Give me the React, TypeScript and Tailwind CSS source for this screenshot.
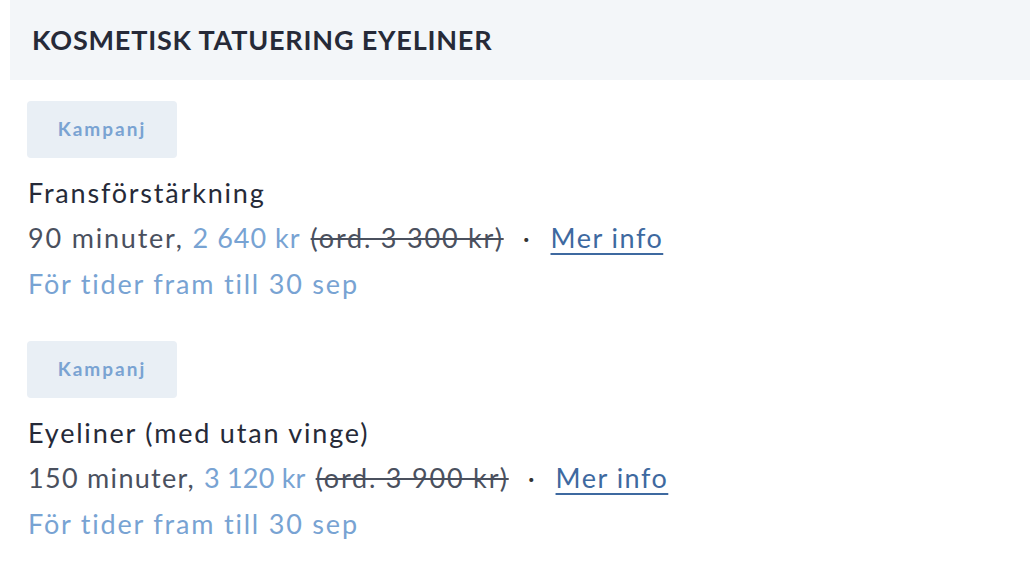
const items = [
  {
    name: 'Fransförstärkning',
    minutes: '90 minuter,',
    price: '2 640 kr',
    ord: '(ord. 3 300 kr)',
    minClass: 'tracking-[1.8px]',
    priceClass: 'tracking-[1px]',
  },
  {
    name: 'Eyeliner (med utan vinge)',
    minutes: '150 minuter,',
    price: '3 120 kr',
    ord: '(ord. 3 900 kr)',
    minClass: 'tracking-[1.3px]',
    priceClass: 'tracking-[0.2px]',
  },
];

export default function App() {
  return (
    <div className="w-[1030px] h-[568px] bg-white overflow-hidden" style={{ fontFamily: 'Lato, "Open Sans", sans-serif' }}>
      <div className="ml-[10px] h-[80px] bg-[#f3f6f9] flex items-center pl-[22px]">
        <h2 className="text-[27px] font-bold text-[#262a38] tracking-[0.8px]">KOSMETISK TATUERING EYELINER</h2>
      </div>
      <div className="px-[27px] pt-[21px]">
        {items.map((it) => (
          <div key={it.name} className="mb-[34px]">
            <div className="w-[150px] h-[57px] rounded-[4px] bg-[#e9eff5] flex items-center justify-center text-[19px] font-bold tracking-[2px] text-[#7aa3d2] mb-[12px]">
              Kampanj
            </div>
            <div className="text-[27px] leading-[46px] tracking-[1.8px] text-[#262a38] pl-[1px]">{it.name}</div>
            <div className="text-[27px] leading-[46px] tracking-[1.8px] text-[#4a505e] pl-[1px] flex items-center -mt-[1px]">
              <span className={it.minClass}>{it.minutes}</span>
              <span className={`ml-[9px] text-[#78a3d3] ${it.priceClass}`}>{it.price}</span>
              <span className="ml-[10px] line-through decoration-[1.5px]">{it.ord}</span>
              <span className="ml-[19px] mr-[19px] text-[#333]">·</span>
              <a className="underline text-[#3e69a0] underline-offset-[5px] tracking-[1.5px]">Mer info</a>
            </div>
            <div className="text-[27px] leading-[46px] tracking-[1.8px] text-[#78a3d3] pl-[1px]">För tider fram till 30 sep</div>
          </div>
        ))}
      </div>
    </div>
  );
}
